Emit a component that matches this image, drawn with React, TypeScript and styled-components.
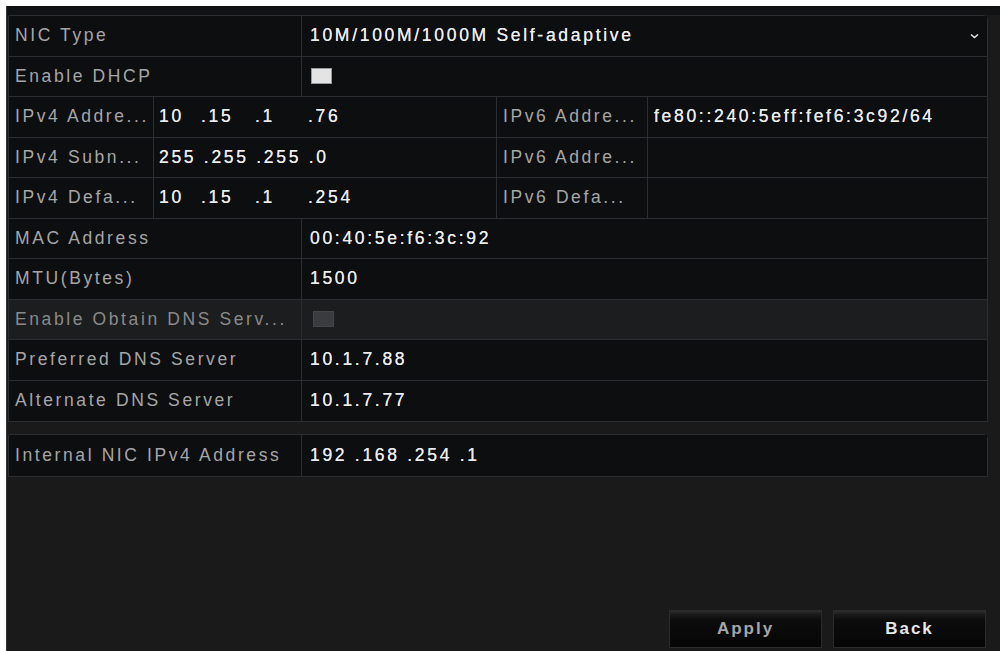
import React from "react";
import styled, { createGlobalStyle } from "styled-components";

const Global = createGlobalStyle`
  html, body { margin: 0; padding: 0; background: #ffffff; }
  body { font-family: "Liberation Sans", Arial, sans-serif; }
  * { box-sizing: border-box; }
`;

const Window = styled.div`
  margin: 6px 0 0 6px;
  width: 994px;
  height: 645px;
  background: linear-gradient(#111213 0 9px, #1a1a1a 9px);
  border-left: 1px solid #3a3a3a;
  display: flex;
  flex-direction: column;
  padding: 9px 12px 3px 1px;
`;

const Group = styled.div<{ $gap?: number }>`
  display: flex;
  flex-direction: column;
  background: #0d0e10;
  border: 1px solid #2c2e31;
  border-radius: 2px 5px 0 0;
  margin-top: ${(p) => p.$gap ?? 0}px;
`;

const Row = styled.div<{ $cols: string; $dim?: boolean }>`
  display: grid;
  grid-template-columns: ${(p) => p.$cols};
  height: 40.5px;
  background: ${(p) => (p.$dim ? "#1c1d1f" : "#0d0e10")};
  border-bottom: 1px solid #2c2e31;
  &:last-child { border-bottom: none; }
`;

const Cell = styled.div<{ $kind: "label" | "value"; $pad?: number; $dim?: boolean }>`
  display: flex;
  align-items: center;
  position: relative;
  padding-left: ${(p) => p.$pad ?? 6}px;
  border-right: 1px solid #2c2e31;
  &:last-child { border-right: none; }
  font-size: 17.5px;
  letter-spacing: ${(p) => (p.$kind === "label" ? 2.6 : 2.7)}px;
  font-weight: 400;
  color: ${(p) => (p.$kind === "label" ? (p.$dim ? "#8a8a8a" : "#a6a6a6") : "#ececec")};
  text-shadow: ${(p) => (p.$kind === "value" ? "0 0 0.6px #ececec" : "none")};
  white-space: pre;
  overflow: hidden;
`;

const Check = styled.span<{ $disabled?: boolean }>`
  display: inline-block;
  width: 21px;
  height: 16px;
  background: ${(p) => (p.$disabled ? "#3a3b3e" : "#e4e4e4")};
  border: 1px solid ${(p) => (p.$disabled ? "#444548" : "#9a9a9a")};
`;

const Chevron = styled.svg`
  position: absolute;
  right: 8px;
  top: 17px;
`;

const Seg = styled.span`
  display: inline-block;
`;

const Footer = styled.div`
  margin-top: auto;
  display: flex;
  justify-content: flex-end;
  gap: 11px;
  padding-right: 2px;
`;

const Button = styled.button<{ $bright?: boolean }>`
  width: 153px;
  height: 38px;
  background: linear-gradient(#2e2e2e 0, #1b1b1b 3px, #0c0c0c 9px, #060606 100%);
  border: 1px solid #2b2b2b;
  color: ${(p) => (p.$bright ? "#e6e6e6" : "#a5a5a5")};
  font-family: "Liberation Sans", Arial, sans-serif;
  font-weight: 700;
  font-size: 17px;
  letter-spacing: 2px;
  padding: 0;
`;

const TWO = "293px 1fr";
const QUAD = "145px 343px 151px 1fr";

function Ip({ parts, widths }: { parts: string[]; widths: number[] }) {
  return (
    <>
      {parts.map((p, i) => (
        <Seg key={i} style={widths[i] ? { width: widths[i] } : undefined}>
          {(i > 0 ? "." : "") + p}
        </Seg>
      ))}
    </>
  );
}

const W = [42, 54, 53, 0];

export default function App() {
  return (
    <>
      <Global />
      <Window>
        <Group>
          <Row $cols={TWO}>
            <Cell $kind="label">NIC Type</Cell>
            <Cell $kind="value" $pad={8}>
              10M/100M/1000M Self-adaptive
              <Chevron width="9" height="6" viewBox="0 0 9 6">
                <path d="M1 1.5 L4.5 4.5 L8 1.5" stroke="#e8e8e8" strokeWidth="1.6" fill="none" />
              </Chevron>
            </Cell>
          </Row>
          <Row $cols={TWO}>
            <Cell $kind="label">Enable DHCP</Cell>
            <Cell $kind="value" $pad={9}>
              <Check />
            </Cell>
          </Row>
          <Row $cols={QUAD}>
            <Cell $kind="label">IPv4 Addre...</Cell>
            <Cell $kind="value" $pad={5}>
              <Ip parts={["10", "15", "1", "76"]} widths={W} />
            </Cell>
            <Cell $kind="label">IPv6 Addre...</Cell>
            <Cell $kind="value" $pad={6}>fe80::240:5eff:fef6:3c92/64</Cell>
          </Row>
          <Row $cols={QUAD}>
            <Cell $kind="label">IPv4 Subn...</Cell>
            <Cell $kind="value" $pad={5}>255 .255 .255 .0</Cell>
            <Cell $kind="label">IPv6 Addre...</Cell>
            <Cell $kind="value" $pad={6}></Cell>
          </Row>
          <Row $cols={QUAD}>
            <Cell $kind="label">IPv4 Defa...</Cell>
            <Cell $kind="value" $pad={5}>
              <Ip parts={["10", "15", "1", "254"]} widths={W} />
            </Cell>
            <Cell $kind="label">IPv6 Defa...</Cell>
            <Cell $kind="value" $pad={6}></Cell>
          </Row>
          <Row $cols={TWO}>
            <Cell $kind="label">MAC Address</Cell>
            <Cell $kind="value" $pad={8}>00:40:5e:f6:3c:92</Cell>
          </Row>
          <Row $cols={TWO}>
            <Cell $kind="label">MTU(Bytes)</Cell>
            <Cell $kind="value" $pad={8}>1500</Cell>
          </Row>
          <Row $cols={TWO} $dim>
            <Cell $kind="label" $dim>Enable Obtain DNS Serv...</Cell>
            <Cell $kind="value" $pad={11}>
              <Check $disabled />
            </Cell>
          </Row>
          <Row $cols={TWO}>
            <Cell $kind="label">Preferred DNS Server</Cell>
            <Cell $kind="value" $pad={8}>10.1.7.88</Cell>
          </Row>
          <Row $cols={TWO}>
            <Cell $kind="label">Alternate DNS Server</Cell>
            <Cell $kind="value" $pad={8}>10.1.7.77</Cell>
          </Row>
        </Group>
        <Group $gap={12}>
          <Row $cols={TWO}>
            <Cell $kind="label">Internal NIC IPv4 Address</Cell>
            <Cell $kind="value" $pad={8}>192 .168 .254 .1</Cell>
          </Row>
        </Group>
        <Footer>
          <Button>Apply</Button>
          <Button $bright>Back</Button>
        </Footer>
      </Window>
    </>
  );
}
